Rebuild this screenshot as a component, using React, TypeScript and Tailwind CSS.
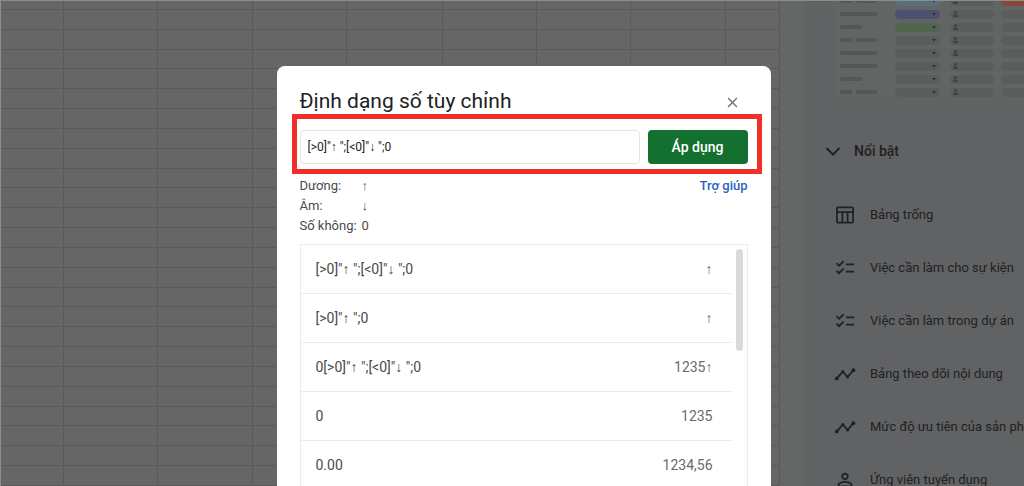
import { useState } from "react";
import { MdChecklist, MdClose, MdPersonOutline } from "react-icons/md";

const PREVIEW_ROWS = [1, 14, 27, 40, 53, 66, 79, 92];
const STATUS_COLORS = ["#56707c", "#4b5170", "#51654f"];

const formats = [
  { pattern: '[>0]"↑ ";[<0]"↓ ";0', sample: "↑" },
  { pattern: '[>0]"↑ ";0', sample: "↑" },
  { pattern: '0[>0]"↑ ";[<0]"↓ ";0', sample: "1235↑" },
  { pattern: "0", sample: "1235" },
  { pattern: "0.00", sample: "1234,56" },
];

const samples = [
  { label: "Dương:", value: "↑" },
  { label: "Âm:", value: "↓" },
  { label: "Số không:", value: "0" },
];

const templates = [
  { icon: <TableIcon />, name: "Bảng trống" },
  { icon: <MdChecklist size={22} />, name: "Việc cần làm cho sự kiện" },
  { icon: <MdChecklist size={22} />, name: "Việc cần làm trong dự án" },
  { icon: <TimelineIcon />, name: "Bảng theo dõi nội dung" },
  { icon: <TimelineIcon />, name: "Mức độ ưu tiên của sản phẩm" },
  { icon: <MdPersonOutline size={22} />, name: "Ứng viên tuyển dụng" },
];

function TableIcon() {
  return (
    <svg width="22" height="22" viewBox="0 0 22 22" fill="none" stroke="currentColor" strokeWidth="1.8">
      <rect x="2.9" y="3.4" width="16.2" height="15.2" rx="1.2" />
      <path d="M3 8.2h16M8.4 8.2v10.4M13.6 8.2v10.4" />
    </svg>
  );
}

function TimelineIcon() {
  return (
    <svg width="22" height="22" viewBox="0 0 22 22" fill="none" stroke="currentColor" strokeWidth="1.8">
      <path d="M2.8 15.4 8.8 8.6l4.8 5.4 5.8-6.8" />
      <g fill="currentColor" stroke="none">
        <circle cx="2.8" cy="15.4" r="1.9" />
        <circle cx="8.8" cy="8.6" r="1.5" />
        <circle cx="13.6" cy="14" r="1.5" />
        <circle cx="19.4" cy="7.2" r="1.9" />
      </g>
    </svg>
  );
}

// Thumbnail of a table template at the top of the side panel
function TablePreview() {
  return (
    <svg width="190" height="97" viewBox="0 0 190 97" className="block">
      <rect width="190" height="97" fill="#636464" />
      {PREVIEW_ROWS.map((y, i) => (
        <g key={y}>
          {i === 0 || i === 3 || i === 7 ? (
            <>
              <rect x="6" y={y - 2} width="12" height="4" rx="1" fill="#555656" />
              <rect x="22" y={y - 2} width="21" height="4" rx="1" fill="#555656" />
            </>
          ) : (
            <rect x="6" y={y - 2} width={i % 4 === 2 ? 22 : 37} height="4" rx="1" fill="#555656" />
          )}
          <rect x="61" y={y - 4} width="45" height="9" rx="4.5" fill={STATUS_COLORS[i] || "#5b5d5d"} />
          <path d={`M98 ${y - 1}h4l-2 2.4z`} fill="#2f3131" />
          <rect x="116" y={y - 4} width="44" height="9" rx="4.5" fill="#5b5d5d" />
          <circle cx="121.5" cy={y - 1.4} r="1.5" fill="#3d4243" />
          <path d={`M118.8 ${y + 3}c0-2 1.4-2.6 2.7-2.6s2.7.6 2.7 2.6z`} fill="#3d4243" />
          <rect x="167" y={y - 4} width="30" height="9" rx="4.5" fill={i === 0 ? "#87493a" : "#5b5d5d"} />
        </g>
      ))}
    </svg>
  );
}

function Sheet() {
  return (
    <div className="flex-1 flex flex-col">
      {Array.from({ length: 25 }).map((_, row) => (
        <div
          key={row}
          className={`grid grid-cols-[64fr_94fr_95fr_94fr_95fr_94fr_94fr_95fr_54fr] border-b border-[#5a5a5a] ${row === 0 ? "h-[10px]" : "flex-1"}`}
        >
          {Array.from({ length: 9 }).map((_, col) => (
            <div key={col} className="border-r border-[#5a5a5a]" />
          ))}
        </div>
      ))}
    </div>
  );
}

function SidePanel() {
  return (
    <aside className="w-[220px] shrink-0 overflow-hidden bg-[#606264] text-[#1f2122]">
      <div className="pl-[30px]">
        <TablePreview />
      </div>
      <button className="mt-11 ml-5 flex items-center gap-3 text-sm font-medium leading-5">
        <svg width="18" height="18" viewBox="0 0 18 18" fill="none" stroke="currentColor" strokeWidth="2">
          <path d="M2.5 6 9 12.5 15.5 6" />
        </svg>
        Nổi bật
      </button>
      <ul className="mt-[27px]">
        {templates.map((template) => (
          <li key={template.name}>
            <button className="flex h-[53px] items-center gap-[14px] pl-[30px] text-[13px] whitespace-nowrap">
              {template.icon}
              {template.name}
            </button>
          </li>
        ))}
      </ul>
    </aside>
  );
}

function FormatDialog() {
  const [format, setFormat] = useState(formats[0].pattern);

  return (
    <div role="dialog" aria-labelledby="dialog-title" className="w-[494px] rounded-lg bg-white px-[23px] pt-6 pb-8">
      <div className="flex h-6 items-center justify-between">
        <h1 id="dialog-title" className="text-[21px] text-[#202124]">
          Định dạng số tùy chỉnh
        </h1>
        <button aria-label="Đóng" className="mr-[7px] text-[#70757a]">
          <MdClose size={17} />
        </button>
      </div>

      {/* Format input */}
      <div className="-ml-2 -mr-[14px] flex gap-2 border-5 border-[#ee3029] pt-[11px] pr-[9px] pb-[5px] pl-[3px]">
        <input
          aria-label="Định dạng số"
          value={format}
          onChange={(e) => setFormat(e.target.value)}
          className="h-[34px] min-w-0 flex-1 rounded border border-[#e4e4e4] px-[7px] text-xs text-[#202124] outline-none"
        />
        <button className="h-[34px] w-[100px] rounded bg-[#13702f] text-sm font-medium text-white">
          Áp dụng
        </button>
      </div>

      {/* Sample values */}
      <div className="mt-0.5 flex items-start justify-between text-[13px]">
        <dl className="text-[#4a4a4a]">
          {samples.map((sample) => (
            <div key={sample.label} className="flex h-5 items-center">
              <dt className="w-[62px]">{sample.label}</dt>
              <dd>{sample.value}</dd>
            </div>
          ))}
        </dl>
        <a href="#" className="leading-5 font-medium text-[#2a62c4]">
          Trợ giúp
        </a>
      </div>

      {/* Format list */}
      <div className="mt-2 flex border border-[#ebebeb]">
        <table className="flex-1 text-sm">
          <tbody className="block">
            {formats.map((item) => (
              <tr key={item.pattern} className="flex h-[49px] items-center justify-between border-b border-[#ebebeb] pr-[19px] pl-[15px]">
                <td className="text-[#4a4a4a]">{item.pattern}</td>
                <td className="text-[#6b6b6b]">{item.sample}</td>
              </tr>
            ))}
          </tbody>
        </table>
        <div className="w-[15px] pt-1 pl-[4px]">
          <div className="h-[102px] w-[7px] rounded-full bg-[#dadada]" />
        </div>
      </div>
    </div>
  );
}

export default function App() {
  return (
    <div className="relative h-screen overflow-hidden bg-[#666666] font-[Roboto,'Liberation_Serif',sans-serif]">
      <div className="flex h-full">
        <Sheet />
        <div className="w-6 shrink-0 bg-[#656666]" />
        <SidePanel />
      </div>
      <div className="absolute inset-0 flex items-start justify-center border-t border-l border-[#8c8e8c] pt-[65px] pl-[22px]">
        <FormatDialog />
      </div>
    </div>
  );
}
